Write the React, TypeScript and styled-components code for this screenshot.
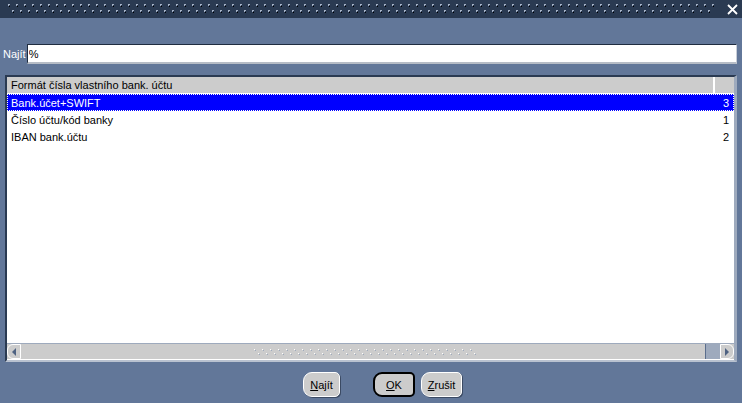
import styled, { createGlobalStyle } from "styled-components";

const GlobalStyle = createGlobalStyle`
  html, body {
    margin: 0;
    padding: 0;
    background: #627799;
  }
  body {
    font-family: "Liberation Sans", Arial, sans-serif;
    font-size: 11px;
  }
`;

const rows = [
  { label: "Bank.účet+SWIFT", value: "3", selected: true },
  { label: "Číslo účtu/kód banky", value: "1", selected: false },
  { label: "IBAN bank.účtu", value: "2", selected: false },
];

const App: React.FC = () => {
  return (
    <Window>
      <GlobalStyle />
      <TitleBar>
        <Grip />
        <CloseButton>
          <svg width="11" height="11" viewBox="0 0 11 11">
            <path d="M1 1 L10 10 M10 1 L1 10" stroke="#ffffff" strokeWidth="1.8" />
          </svg>
        </CloseButton>
      </TitleBar>

      <Body>
        <SearchRow>
          <Label>Najít</Label>
          <SearchInput defaultValue="%" />
        </SearchRow>

        <ListPanel>
          <Header>
            <HeaderCell>Formát čísla vlastního bank. účtu</HeaderCell>
            <HeaderEnd />
          </Header>
          <Rows>
            {rows.map((r) => (
              <Row key={r.label} $selected={r.selected}>
                <span>{r.label}</span>
                <span>{r.value}</span>
              </Row>
            ))}
          </Rows>
          <HScroll>
            <ArrowButton $side="left">
              <svg width="6" height="8" viewBox="0 0 6 8">
                <path d="M5 0 L1 4 L5 8 Z" fill="#4e6282" />
              </svg>
            </ArrowButton>
            <Track>
              <Thumb />
            </Track>
            <TrackEnd />
            <ArrowButton $side="right">
              <svg width="6" height="8" viewBox="0 0 6 8">
                <path d="M1 0 L5 4 L1 8 Z" fill="#4e6282" />
              </svg>
            </ArrowButton>
          </HScroll>
        </ListPanel>

        <Buttons>
          <Button $width={37}>
            <u>N</u>ajít
          </Button>
          <Spacer />
          <Button $width={42} $default>
            <u>O</u>K
          </Button>
          <Button $width={41}>
            <u>Z</u>rušit
          </Button>
        </Buttons>
      </Body>
    </Window>
  );
};

export default App;

const Window = styled.div`
  width: 742px;
  height: 403px;
  display: flex;
  flex-direction: column;
  background: #627799;
  overflow: hidden;
`;

const TitleBar = styled.div`
  height: 18px;
  box-sizing: border-box;
  background: #2a3a52;
  display: flex;
  align-items: center;
  padding: 0 4px 0 8px;
`;

const Grip = styled.div`
  flex: 1;
  height: 10px;
  margin-right: 12px;
  background-image:
    linear-gradient(90deg, #a8b4c8 0 2px, transparent 2px),
    linear-gradient(90deg, #a8b4c8 0 1px, transparent 1px),
    linear-gradient(90deg, transparent 1px, #000000 1px 2px, transparent 2px),
    linear-gradient(90deg, #a8b4c8 0 2px, transparent 2px),
    linear-gradient(90deg, #a8b4c8 0 1px, transparent 1px),
    linear-gradient(90deg, transparent 1px, #000000 1px 2px, transparent 2px);
  background-size: 8px 1px, 8px 1px, 8px 1px, 8px 1px, 8px 1px, 8px 1px;
  background-repeat: repeat-x;
  background-position: 0 0, 0 1px, 0 2px, 4px 6px, 4px 7px, 4px 8px;
`;

const CloseButton = styled.div`
  width: 12px;
  height: 12px;
  display: flex;
  align-items: center;
  justify-content: center;
`;

const Body = styled.div`
  flex: 1;
  display: flex;
  flex-direction: column;
  padding: 26px 5px 0 3px;
`;

const SearchRow = styled.div`
  display: flex;
  align-items: center;
  gap: 1px;
  height: 20px;
`;

const Label = styled.span`
  color: #ffffff;
  font-size: 11px;
`;

const SearchInput = styled.input`
  flex: 1;
  height: 20px;
  box-sizing: border-box;
  border: 1px solid #c8ced8;
  border-top-color: #1f2c40;
  border-left-color: #1f2c40;
  border-bottom: 2px solid #b6bcc6;
  background: #ffffff;
  font-family: "Liberation Sans", Arial, sans-serif;
  font-size: 11px;
  padding: 0 1px;
  outline: none;
`;

const ListPanel = styled.div`
  margin: 11px 0 0 2px;
  height: 287px;
  box-sizing: border-box;
  display: flex;
  flex-direction: column;
  background: #ffffff;
  border-top: 2px solid #2a3a52;
  border-left: 2px solid #2a3a52;
  border-right: 3px solid #9eaabd;
  border-bottom: 2px solid #b9c2d0;
`;

const Header = styled.div`
  display: flex;
  height: 16px;
  background: #cccccc;
  border-bottom: 1px solid #ffffff;
`;

const HeaderCell = styled.div`
  flex: 1;
  padding: 2px 0 0 4px;
  color: #000000;
  border-right: 2px solid #ffffff;
`;

const HeaderEnd = styled.div`
  width: 19px;
`;

const Rows = styled.div`
  flex: 1;
  display: flex;
  flex-direction: column;
`;

const Row = styled.div<{ $selected: boolean }>`
  height: 17px;
  box-sizing: border-box;
  display: flex;
  align-items: center;
  justify-content: space-between;
  padding: 0 4px 0 3px;
  background: ${(p) => (p.$selected ? "#0000ff" : "#ffffff")};
  color: ${(p) => (p.$selected ? "#ffffff" : "#000000")};
  border: 1px dotted ${(p) => (p.$selected ? "#ffffff" : "transparent")};
`;

const HScroll = styled.div`
  height: 15px;
  display: flex;
  background: #cccccc;
  border-top: 1px solid #9eaabd;
  border-bottom: 1px solid #ffffff;
`;

const ArrowButton = styled.div<{ $side: "left" | "right" }>`
  width: 14px;
  display: flex;
  align-items: center;
  justify-content: center;
  background: #cccccc;
  border: 1px solid #ffffff;
  border-radius: ${(p) => (p.$side === "left" ? "6px 0 0 6px" : "0 6px 6px 0")};
  box-sizing: border-box;
`;

const Track = styled.div`
  flex: 1;
  display: flex;
  justify-content: center;
  align-items: center;
`;

const Thumb = styled.div`
  width: 224px;
  height: 8px;
  margin-left: 6px;
  background-image:
    linear-gradient(90deg, #ffffff 0 1px, transparent 1px),
    linear-gradient(90deg, transparent 1px, #9eaabd 1px 2px, transparent 2px),
    linear-gradient(90deg, #ffffff 0 1px, transparent 1px),
    linear-gradient(90deg, transparent 1px, #9eaabd 1px 2px, transparent 2px);
  background-size: 8px 1px, 8px 1px, 8px 1px, 8px 1px;
  background-repeat: repeat-x;
  background-position: 0 1px, 0 2px, 4px 5px, 4px 6px;
`;

const TrackEnd = styled.div`
  width: 14px;
  background: #9eaabd;
  border-left: 1px solid #5b6e8d;
`;

const Buttons = styled.div`
  display: flex;
  justify-content: center;
  align-items: center;
  gap: 6px;
  margin-top: 10px;
  padding-left: 25px;
`;

const Spacer = styled.div`
  width: 21px;
`;

const Button = styled.div<{ $default?: boolean; $width: number }>`
  width: ${(p) => p.$width}px;
  height: 25px;
  box-sizing: border-box;
  display: flex;
  align-items: center;
  justify-content: center;
  background: #cccccc;
  color: #000000;
  border-radius: 9px 5px 5px 9px;
  border: ${(p) => (p.$default ? "2px solid #000000" : "1px solid #ffffff")};
  box-shadow: ${(p) => (p.$default ? "none" : "1px 1px 0 #3b4a63")};
  font-size: 11px;
  u {
    text-decoration: underline;
  }
`;
